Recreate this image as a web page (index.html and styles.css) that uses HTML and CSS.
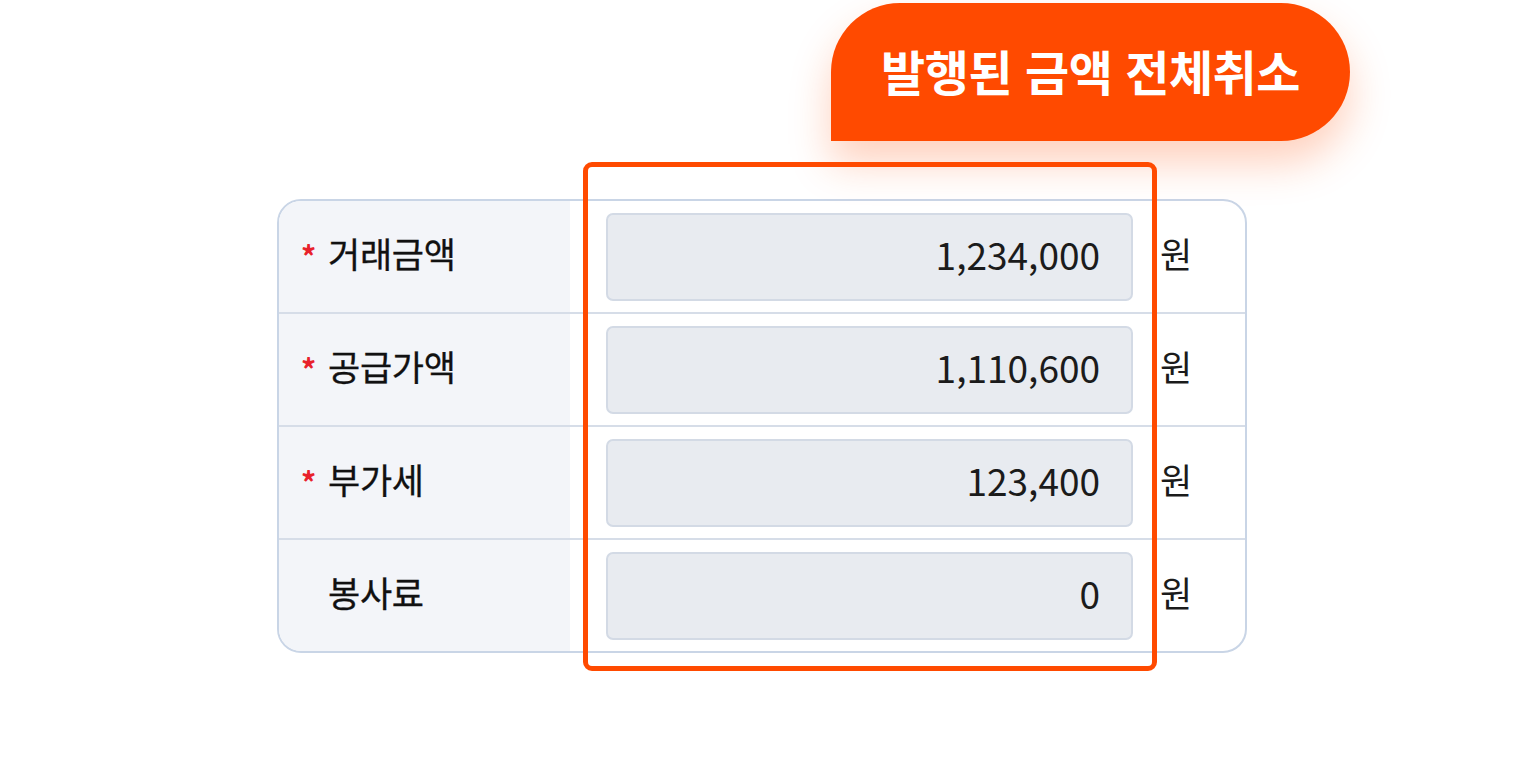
FILE: index.html
```html
<!DOCTYPE html>
<html lang="ko">
<head>
<meta charset="utf-8">
<title>발행된 금액 전체취소</title>
<link rel="stylesheet" href="styles.css">
</head>
<body>
<div class="stage">
  <div class="badge">발행된 금액 전체취소</div>
  <div class="card-wrap">
    <div class="card">
      <div class="row">
        <div class="label"><span class="req">*</span>거래금액</div>
        <div class="value"><div class="input">1,234,000</div></div>
        <div class="unit">원</div>
      </div>
      <div class="row">
        <div class="label"><span class="req">*</span>공급가액</div>
        <div class="value"><div class="input">1,110,600</div></div>
        <div class="unit">원</div>
      </div>
      <div class="row">
        <div class="label"><span class="req">*</span>부가세</div>
        <div class="value"><div class="input">123,400</div></div>
        <div class="unit">원</div>
      </div>
      <div class="row">
        <div class="label"><span class="req req-empty"></span>봉사료</div>
        <div class="value"><div class="input">0</div></div>
        <div class="unit">원</div>
      </div>
    </div>
    <div class="highlight"></div>
  </div>
</div>
</body>
</html>
```
FILE: styles.css
```css
* { box-sizing: border-box; }
html, body {
  margin: 0;
  padding: 0;
  background: #ffffff;
}
body {
  font-family: "Noto Sans CJK KR", "Noto Sans", sans-serif;
  color: #1b1b1b;
  width: 1524px;
  height: 780px;
  overflow: hidden;
}
.stage {
  padding-top: 3px;
  display: flex;
  flex-direction: column;
}
.badge {
  align-self: flex-start;
  margin-left: 831px;
  width: 519px;
  height: 138px;
  background: #ff4a00;
  color: #ffffff;
  border-radius: 69px 69px 69px 0;
  box-shadow: 0 22px 40px rgba(255, 90, 20, 0.28);
  display: flex;
  align-items: center;
  justify-content: center;
  font-size: 48px;
  font-weight: 700;
  letter-spacing: -0.5px;
  padding-bottom: 4px;
  position: relative;
  z-index: 2;
}
.card-wrap {
  position: relative;
  margin-left: 277px;
  margin-top: 58px;
  width: 970px;
}
.card {
  position: relative;
  z-index: 1;
  width: 970px;
  border: 2.5px solid #c9d5e6;
  border-radius: 24px;
  overflow: hidden;
  background: #ffffff;
}
.row {
  display: flex;
  align-items: center;
  height: 113px;
  border-bottom: 2px solid #d6dde8;
}
.row:last-child {
  height: 111px;
  border-bottom: none;
}
.label {
  width: 291px;
  height: 100%;
  background: #f3f5f9;
  display: flex;
  align-items: center;
  padding-left: 22px;
  padding-bottom: 8px;
  font-size: 35px;
  font-weight: 400;
  letter-spacing: -0.3px;
  color: #111111;
  -webkit-text-stroke: 0.3px #111111;
}
.req {
  width: 27px;
  color: #e8212b;
  font-size: 30px;
  font-weight: 700;
  padding-top: 4px;
  -webkit-text-stroke: 0;
}
.value {
  padding-left: 36px;
}
.input {
  width: 527px;
  height: 88px;
  background: #e8ebf0;
  border: 2px solid #d3dae5;
  border-radius: 7px;
  display: flex;
  align-items: center;
  justify-content: flex-end;
  padding-right: 31px;
  padding-bottom: 6px;
  font-size: 37px;
  color: #1b1b1b;
}
.unit {
  margin-left: 27px;
  font-size: 35px;
  padding-bottom: 8px;
  color: #1b1b1b;
}
.highlight {
  position: absolute;
  z-index: 3;
  left: 306px;
  top: -37px;
  width: 574px;
  height: 509px;
  border: 5px solid #ff4a00;
  border-radius: 9px;
  pointer-events: none;
}
```
